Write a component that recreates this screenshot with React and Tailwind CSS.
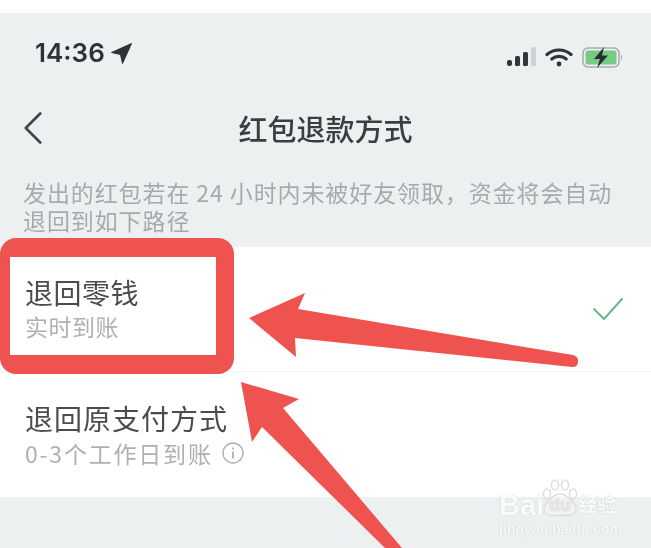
import { ChevronLeft } from 'lucide-react'

const cjk = { fontFamily: '"Noto Sans CJK SC", sans-serif' }
const latin = { fontFamily: '"Liberation Sans", sans-serif' }

function StatusIcons() {
  return (
    <div className="flex items-center gap-[8px]">
      <svg width="30" height="21" viewBox="0 0 30 21">
        <rect x="0" y="13" width="5" height="6" rx="2" fill="#33363a" />
        <rect x="8" y="9" width="5" height="10" rx="1.5" fill="#33363a" />
        <rect x="16" y="5" width="5" height="14" rx="1.5" fill="#33363a" />
        <rect x="24" y="0" width="5" height="19" rx="1.5" fill="#cfd2d4" />
      </svg>
      <svg width="28" height="21" viewBox="0 0 28 21" fill="none" stroke="#2f3236" strokeLinecap="round" strokeWidth="3.2">
        <path d="M2 7.5C9 1.5 19 1.5 26 7.5" />
        <path d="M6.8 12C11 8.6 17 8.6 21.2 12" />
        <circle cx="14" cy="17" r="1.6" fill="#2f3236" strokeWidth="1.6" />
      </svg>
      <svg className="ml-[1px]" width="42" height="21" viewBox="0 0 42 21" fill="none">
        <rect x="1" y="1" width="36" height="19" rx="5" stroke="#a9adaf" strokeWidth="1.6" />
        <rect x="3.5" y="3.5" width="31" height="14" rx="2.5" fill="#76cc84" />
        <path d="M39 7.5c1.6.6 1.6 5.4 0 6z" fill="#a9adaf" />
        <path d="M22 0L12 12H18L15 21L26 8.5H20z" fill="#2c2f2f" />
      </svg>
    </div>
  )
}

function Watermark() {
  return (
    <div className="absolute left-[499px] top-[477px] flex flex-col text-[#fafbfb] [text-shadow:0_0_1px_#b9bdc0]">
      <div className="flex h-[40px] items-end leading-none">
        <span className="text-[29px] font-bold leading-[24px]" style={latin}>Bai</span>
        <span className="relative -ml-[2px] flex h-[38px] w-[36px] items-end justify-center">
          <svg className="absolute left-0 top-0" width="36" height="38" viewBox="0 0 36 38" fill="none" stroke="#dcdfe1" strokeWidth="1.5">
            <ellipse cx="5" cy="15" rx="3.5" ry="5" />
            <ellipse cx="13" cy="6" rx="3.5" ry="5" />
            <ellipse cx="23" cy="6" rx="3.5" ry="5" />
            <ellipse cx="31" cy="15" rx="3.5" ry="5" />
            <path d="M18 15C11 15 1 26 2 31C3 37 12 37 18 36C25 37 34 37 34 30C34 25 25 15 18 15Z" fill="#f7f8f8" fillOpacity="0.5" />
          </svg>
          <span className="relative pb-[3px] text-[18px] font-bold text-[#e6e8e9]" style={latin}>du</span>
        </span>
        <span className="text-[19px] font-bold leading-[26px]" style={cjk}>经验</span>
      </div>
      <span className="mt-[5px] text-[14px] font-bold leading-none" style={latin}>jingyan.baidu.com</span>
    </div>
  )
}

export default function App() {
  return (
    <div className="relative flex h-[548px] w-[651px] flex-col overflow-hidden bg-white" style={cjk}>
      {/* white strip above the phone shot */}
      <div className="h-[13px] shrink-0 bg-white" />

      <div className="flex h-[234px] shrink-0 flex-col bg-[#edf0f1] blur-[0.6px]">
        <div className="flex h-[55px] items-end justify-between pl-[35px] pr-[27px]">
          <div className="flex items-center gap-[6px]">
            <span className="text-[26px] font-semibold leading-[30px] text-[#2f3236]" style={{ fontFamily: 'Inter, sans-serif' }}>14:36</span>
            <svg width="21" height="21" viewBox="0 0 21 21">
              <path d="M20.5 0.5L0.5 9.5L9.5 11.5L11.5 20.5Z" fill="#2f3236" stroke="#2f3236" strokeLinejoin="round" />
            </svg>
          </div>
          <StatusIcons />
        </div>

        <div className="relative mt-[40px] flex h-[40px] items-center justify-center">
          <ChevronLeft className="absolute left-[4px] h-[58px] w-[58px] text-[#44474a]" strokeWidth={1.1} />
          <h1 className="text-[29px] font-medium leading-[40px] text-[#3b3e41]">红包退款方式</h1>
        </div>

        <p className="mt-[30px] pl-[23px] text-[23px] leading-[28px] tracking-[0.9px] whitespace-nowrap text-[#a6aaad]">
          发出的红包若在 24 小时内未被好友领取，资金将会自动
          <br />
          退回到如下路径
        </p>
      </div>

      <div className="h-[250px] shrink-0 bg-white blur-[0.6px]">
        <div className="flex h-[125px] items-center justify-between border-b border-[#f3f4f5] pl-[25px] pr-[27px]">
          <div className="flex flex-col pb-[7px]">
            <span className="text-[28px] leading-[40px] tracking-[0.5px] text-[#4a4d50]">退回零钱</span>
            <span className="text-[23px] leading-[28px] tracking-[0.5px] text-[#aeb1b3]">实时到账</span>
          </div>
          <svg width="32" height="24" viewBox="0 0 32 24" fill="none" stroke="#6cb68c" strokeWidth="2" strokeLinecap="round" strokeLinejoin="round">
            <path d="M2 12L12 22L30 2" />
          </svg>
        </div>
        <div className="flex h-[125px] flex-col justify-center pb-[4px] pl-[25px]">
          <span className="text-[28px] leading-[40px] tracking-[1px] text-[#4a4d50]">退回原支付方式</span>
          <div className="flex items-center gap-[9px] text-[#aeb1b3]">
            <span className="text-[23px] leading-[30px] tracking-[1.8px]">0-3个工作日到账</span>
            <svg width="22" height="22" viewBox="0 0 22 22" fill="none" stroke="#aeb1b3" strokeWidth="1.4">
              <circle cx="11" cy="11" r="10" />
              <path d="M11 9.5V16.5M11 5.5V7.5" strokeWidth="1.8" />
            </svg>
          </div>
        </div>
      </div>

      <div className="flex-1 bg-[#edf0f1]" />

      <Watermark />

      {/* red annotations drawn over the shot */}
      <div className="absolute left-0 top-[238px] h-[136px] w-[234px] rounded-[16px] border-y-[19px] border-l-[10px] border-r-[18px] border-[#ef5350]" />
      <svg className="absolute left-0 top-0" width="651" height="548" viewBox="0 0 651 548">
        <path d="M249 318L305 293L298 309L573 355Q579 357 578 362Q578 367 572 367L295 338L296 357Z" fill="#ef5350" />
        <path d="M241 382L299 399L283 408L402 548H385L262 427L252 442Z" fill="#ef5350" />
      </svg>
    </div>
  )
}
